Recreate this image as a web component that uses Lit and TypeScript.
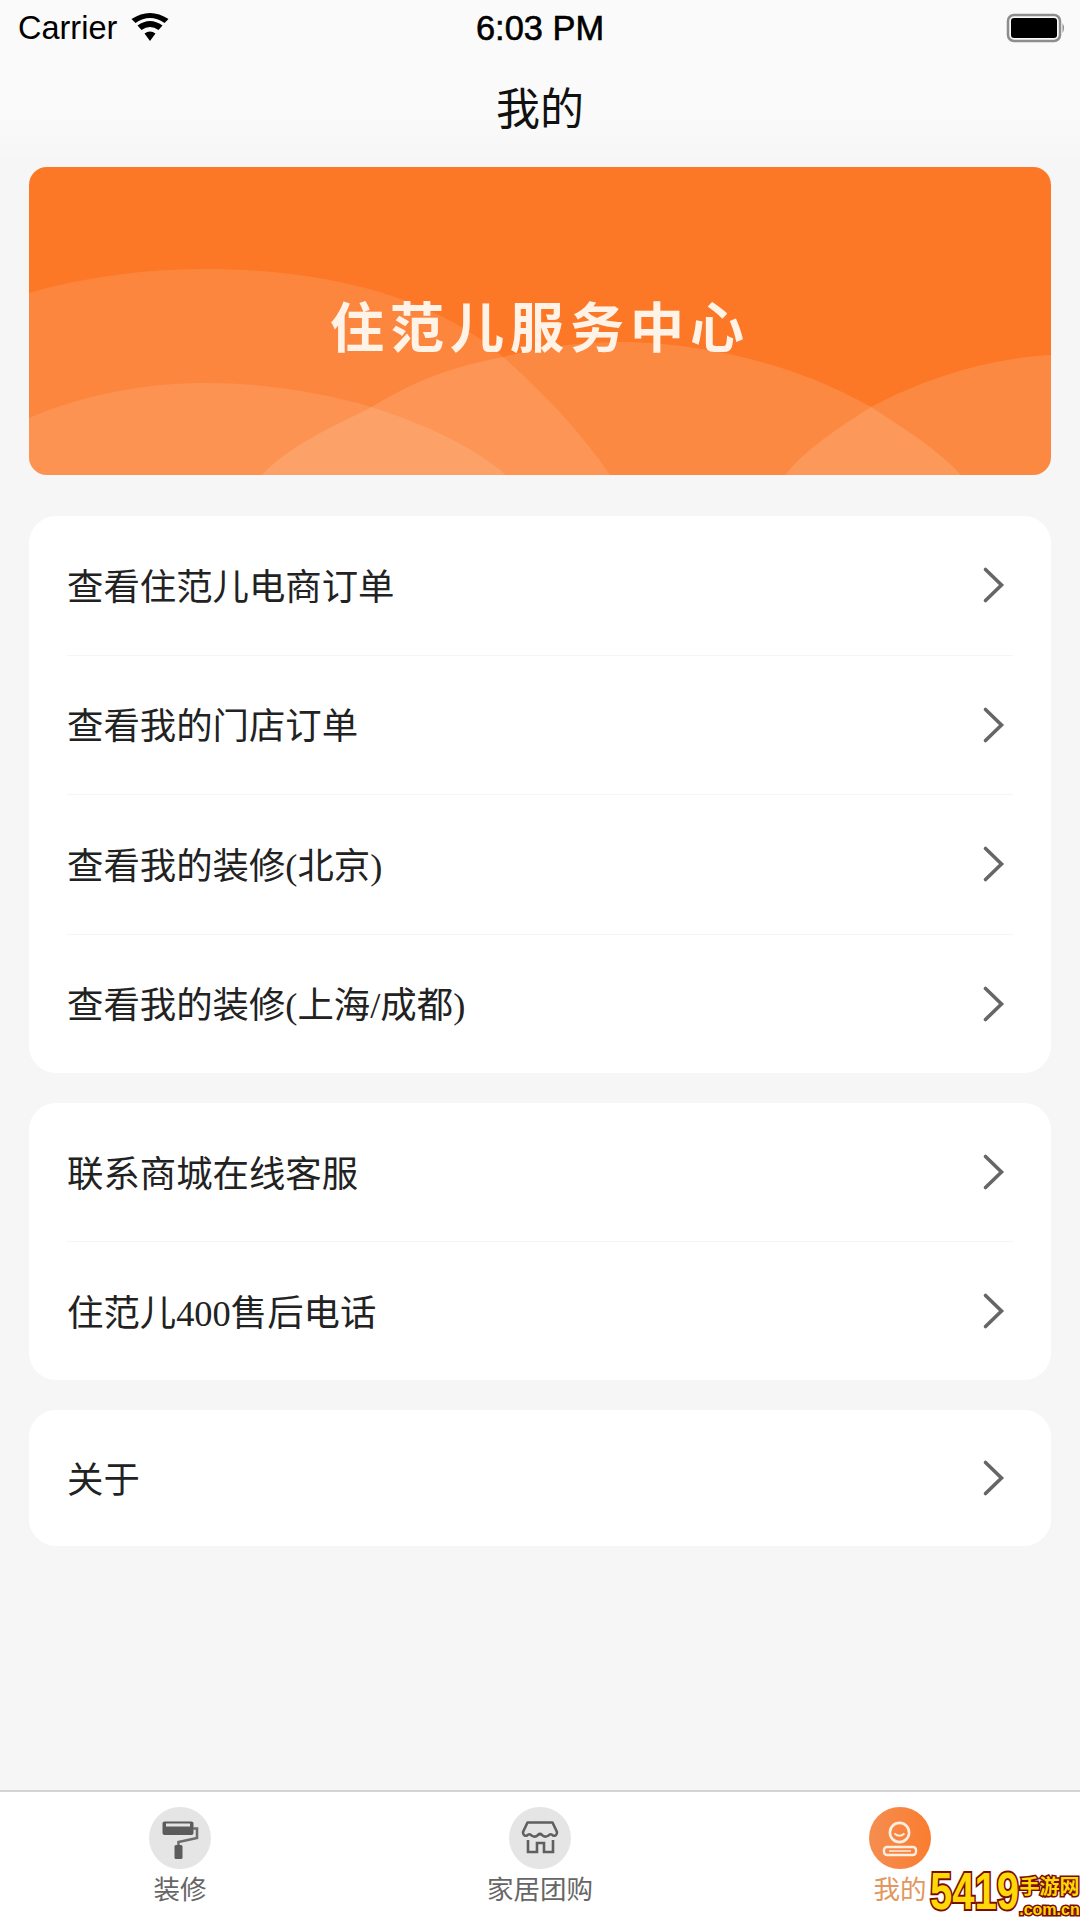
import { LitElement, html, css, svg } from "lit";
import { customElement } from "lit/decorators.js";

const chevron = html`<svg class="chev" width="24" height="40" viewBox="0 0 24 40"><path d="M3.5 4.5 L19.5 20 L3.5 35.5" fill="none" stroke="#666" stroke-width="3.6" stroke-linecap="round" stroke-linejoin="miter"/></svg>`;

const groups: { cls: string; rows: string[] }[] = [
  { cls: "c1", rows: ["查看住范儿电商订单", "查看我的门店订单", "查看我的装修(北京)", "查看我的装修(上海/成都)"] },
  { cls: "c2", rows: ["联系商城在线客服", "住范儿400售后电话"] },
  { cls: "c3", rows: ["关于"] },
];

@customElement("app-root")
export class AppRoot extends LitElement {
  static styles = css`
    :host {
      display: flex;
      flex-direction: column;
      width: 1080px;
      height: 1920px;
      position: relative;
      overflow: hidden;
      background: #f6f6f6;
      font-family: "Liberation Serif", "Noto Sans CJK SC", serif;
      color: #222;
    }
    .top { background: linear-gradient(#fafafa 75%, #f7f7f7); height: 156px; flex: none; }
    .status {
      height: 56px;
      display: flex;
      align-items: center;
      justify-content: space-between;
      padding: 0 14px 0 18px;
      position: relative;
      font-family: "Liberation Sans", "Noto Sans CJK SC", sans-serif;
      color: #000;
    }
    .left { display: flex; align-items: center; gap: 13px; font-size: 32.5px; }
    .time {
      position: absolute;
      left: 0; right: 0;
      text-align: center;
      font-size: 34.4px;
      -webkit-text-stroke: 0.6px #000;
    }
    .title {
      height: 100px;
      display: flex;
      align-items: center;
      justify-content: center;
      font-family: "Noto Sans CJK SC", sans-serif;
      font-size: 44px;
      color: #111;
      box-sizing: border-box;
    }
    main {
      flex: 1;
      padding: 11px 29px 0;
      display: flex;
      flex-direction: column;
    }
    .banner {
      height: 308px;
      border-radius: 18px;
      overflow: hidden;
      position: relative;
      background: #fc7826;
      flex: none;
    }
    .banner svg { display: block; }
    .banner span {
      position: absolute;
      inset: 7px 0 0 0;
      display: flex;
      align-items: center;
      justify-content: center;
      font-family: "Noto Sans CJK SC", sans-serif;
      font-weight: 700;
      font-size: 54px;
      letter-spacing: 6px;
      color: #fff3e8;
    }
    .card {
      background: #fff;
      border-radius: 27px;
      padding: 0 38px;
      display: flex;
      flex-direction: column;
      margin-top: 30px;
      flex: none;
    }
    .card.c1 { height: 557px; margin-top: 41px; }
    .card.c2 { height: 277px; }
    .card.c3 { height: 136px; }
    .row {
      flex: 1;
      display: flex;
      align-items: center;
      justify-content: space-between;
      font-size: 36.4px;
      padding-right: 7.5px;
      border-bottom: 1px solid #f5f5f5;
    }
    .row span { padding-bottom: 3px; }
    .row:last-child { border-bottom: none; }
    .chev { display: block; }
    nav {
      height: 130px;
      flex: none;
      background: #fff;
      border-top: 2px solid #d4d4d4;
      box-sizing: border-box;
      display: grid;
      grid-template-columns: repeat(3, 1fr);
    }
    .tab {
      display: flex;
      flex-direction: column;
      align-items: center;
      padding-top: 15px;
      font-family: "Noto Sans CJK SC", sans-serif;
      font-size: 26.5px;
      color: #666;
    }
    .tab svg { display: block; }
    .tab b { font-weight: 400; line-height: 36px; margin-top: 1px; }
    .tab.on b { color: #e2975f; }
    .mark {
      position: absolute;
      right: 0;
      bottom: 3px;
      width: 150px;
      height: 50px;
      display: flex;
      align-items: flex-end;
      font-family: "Liberation Sans", "Noto Sans CJK SC", sans-serif;
      font-weight: 700;
      color: #ffd808;
      -webkit-text-stroke: 3px #7a0c00;
      paint-order: stroke fill;
      line-height: 1;
    }
    .num {
      font-size: 40px;
      line-height: 40px;
      white-space: nowrap;
      transform: scaleY(1.3);
      transform-origin: center bottom;
      flex: none;
    }
    .stack {
      display: flex;
      flex-direction: column;
      align-items: center;
      gap: 7px;
      flex: 1;
    }
    .cn { font-family: "Noto Sans CJK SC", sans-serif; font-size: 20px; white-space: nowrap; line-height: 20px; }
    .dom { font-size: 16px; line-height: 14px; white-space: nowrap; }
  `;

  private wifi() {
    return html`<svg width="40" height="30" viewBox="0 0 40 30"><path d="M20 28 L14.5 20.5 Q20 16.5 25.5 20.5 Z M11.5 17 L7.5 12.5 Q20 3.5 32.5 12.5 L28.5 17 Q20 11 11.5 17 Z M5.5 10 L1.5 6 Q20 -6 38.5 6 L34.5 10 Q20 0 5.5 10 Z" fill="#000"/></svg>`;
  }

  private battery() {
    return html`<svg width="60" height="32" viewBox="0 0 60 32"><rect x="2" y="3" width="52" height="26" rx="6" fill="none" stroke="#8d8d8d" stroke-width="2.5"/><rect x="5" y="6" width="46" height="20" rx="3" fill="#000"/><path d="M56.5 11 Q59.5 16 56.5 21 Z" fill="#8d8d8d"/></svg>`;
  }

  private roller() {
    return html`<svg width="62" height="62" viewBox="0 0 62 62">
      <circle cx="31" cy="31" r="31" fill="#e5e5e5"/>
      <rect x="13.5" y="14.5" width="31" height="13.5" rx="2" fill="#5c5c5c"/>
      <rect x="17" y="16.5" width="24" height="3" fill="#e5e5e5"/>
      <path d="M44 21.5 H48 V31 L29.5 35 V39" fill="none" stroke="#6e6e6e" stroke-width="2.6"/>
      <rect x="25.5" y="38" width="8" height="14" rx="1.5" fill="#5c5c5c"/>
    </svg>`;
  }

  private store() {
    return html`<svg width="62" height="62" viewBox="0 0 62 62">
      <circle cx="31" cy="31" r="31" fill="#e5e5e5"/>
      <path d="M18.5 15.5 H43.5 L48 25 Q48 29.5 44 28.5 Q41.5 26 39.5 28.5 Q35.5 31 33 28 Q31 26 29 28 Q26 31 22.5 28.5 Q20.5 26 18 28.5 Q14 29.5 14 25 Z" fill="none" stroke="#5f5f5f" stroke-width="2.6" stroke-linejoin="round"/>
      <path d="M19 33 V45 H28 V36 H35 V45 H44 V33" fill="none" stroke="#5f5f5f" stroke-width="2.6"/>
    </svg>`;
  }

  private person() {
    return html`<svg width="62" height="62" viewBox="0 0 62 62">
      <defs><linearGradient id="pg" x1="0" x2="1" y1="0" y2="0"><stop offset="0" stop-color="#f58d50"/><stop offset="1" stop-color="#fa7d30"/></linearGradient></defs>
      <circle cx="31" cy="31" r="31" fill="url(#pg)"/>
      <circle cx="30.5" cy="25.5" r="9.6" fill="none" stroke="#fdeee2" stroke-width="2.6"/>
      <path d="M25.5 26.5 Q30.5 31 35.5 26.5" fill="none" stroke="#fdeee2" stroke-width="2"/>
      <rect x="15" y="40" width="32" height="8" rx="3" fill="none" stroke="#fdeee2" stroke-width="2.4"/>
      <path d="M20 44 H42" stroke="#fdeee2" stroke-width="1.5"/>
    </svg>`;
  }

  private bannerArt() {
    return svg`
      <path d="M29 293 C88 276 148 269 207 269 C325 269 436 297 503 357 C550 398 585 438 610 475 L29 475 Z" fill="#fff" fill-opacity=".11"/>
      <path d="M29 418 C88 393 148 383 207 383 C268 383 325 394 372 407 C425 425 470 444 506 475 L29 475 Z" fill="#fff" fill-opacity=".11"/>
      <path d="M262 475 C290 445 330 428 372 407 C415 380 455 366 503 357 C540 347 580 342 620 342 C690 342 790 360 871 407 C910 432 940 452 961 475 Z" fill="#fff" fill-opacity=".13"/>
      <path d="M785 475 C805 450 835 430 871 407 C925 378 990 358 1051 355 L1051 475 Z" fill="#fff" fill-opacity=".13"/>
    `;
  }

  render() {
    return html`
      <div class="top">
        <div class="status">
          <div class="left"><span>Carrier</span>${this.wifi()}</div>
          <div class="time">6:03 PM</div>
          ${this.battery()}
        </div>
        <div class="title">我的</div>
      </div>
      <main>
        <div class="banner">
          <svg width="1022" height="308" viewBox="29 167 1022 308">${this.bannerArt()}</svg>
          <span>住范儿服务中心</span>
        </div>
        ${groups.map(
          (g) => html`<section class="card ${g.cls}">
            ${g.rows.map((r) => html`<div class="row"><span>${r}</span>${chevron}</div>`)}
          </section>`
        )}
      </main>
      <nav>
        <div class="tab">${this.roller()}<b>装修</b></div>
        <div class="tab">${this.store()}<b>家居团购</b></div>
        <div class="tab on">${this.person()}<b>我的</b></div>
      </nav>
      <div class="mark">
        <span class="num">5419</span>
        <span class="stack"><span class="cn">手游网</span><span class="dom">.com.cn</span></span>
      </div>
    `;
  }
}
